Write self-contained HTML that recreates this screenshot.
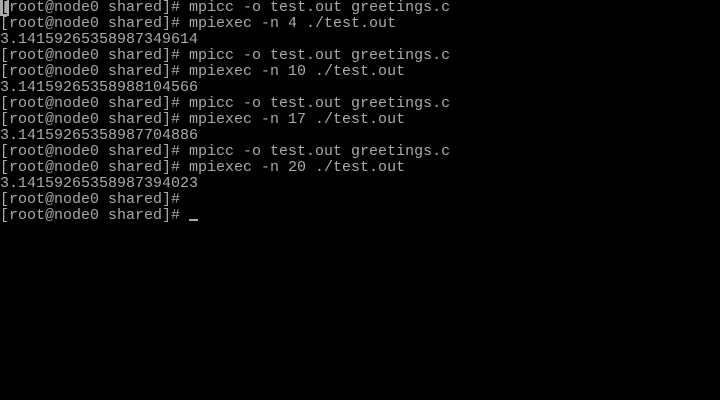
<!DOCTYPE html>
<html><head><meta charset="utf-8"><style>
html,body{margin:0;padding:0;background:#000;width:720px;height:400px;overflow:hidden}
pre{margin:0;font-family:"Liberation Mono",monospace;font-size:15px;line-height:16px;color:#aaa;letter-spacing:0;position:absolute;left:0;top:0}
.c{background:#aaa;color:#000}
.u{position:absolute;left:189px;top:219px;width:9px;height:2px;background:#aaa}
</style></head><body>
<pre><span class="c">[</span>root@node0 shared]# mpicc -o test.out greetings.c
[root@node0 shared]# mpiexec -n 4 ./test.out
3.14159265358987349614
[root@node0 shared]# mpicc -o test.out greetings.c
[root@node0 shared]# mpiexec -n 10 ./test.out
3.14159265358988104566
[root@node0 shared]# mpicc -o test.out greetings.c
[root@node0 shared]# mpiexec -n 17 ./test.out
3.14159265358987704886
[root@node0 shared]# mpicc -o test.out greetings.c
[root@node0 shared]# mpiexec -n 20 ./test.out
3.14159265358987394023
[root@node0 shared]#
[root@node0 shared]# </pre>
<div class="u"></div>
</body></html>
